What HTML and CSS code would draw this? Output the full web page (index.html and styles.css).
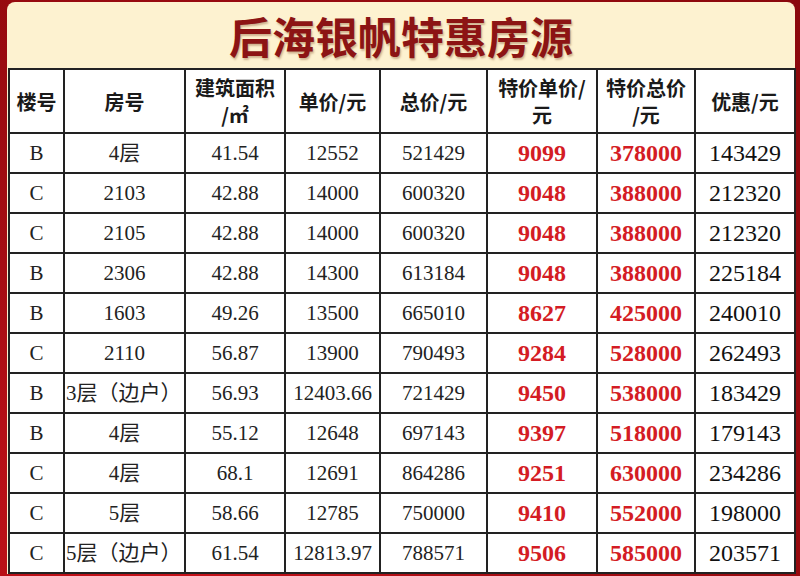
FILE: index.html
```html
<!DOCTYPE html>
<html lang="zh">
<head>
<meta charset="utf-8">
<title>后海银帆特惠房源</title>
<link rel="stylesheet" href="styles.css">
</head>
<body>
<div class="panel">
  <h1 class="title">后海银帆特惠房源</h1>
  <table class="grid">
    <colgroup>
      <col class="c1"><col class="c2"><col class="c3"><col class="c4"><col class="c5"><col class="c6"><col class="c7"><col class="c8">
    </colgroup>
    <thead>
      <tr>
        <th>楼号</th>
        <th>房号</th>
        <th>建筑面积<br>/㎡</th>
        <th>单价/元</th>
        <th>总价/元</th>
        <th>特价单价/<br>元</th>
        <th>特价总价<br>/元</th>
        <th>优惠/元</th>
      </tr>
    </thead>
    <tbody>
      <tr><td>B</td><td>4层</td><td>41.54</td><td>12552</td><td>521429</td><td class="red">9099</td><td class="red">378000</td><td class="save">143429</td></tr>
      <tr><td>C</td><td>2103</td><td>42.88</td><td>14000</td><td>600320</td><td class="red">9048</td><td class="red">388000</td><td class="save">212320</td></tr>
      <tr><td>C</td><td>2105</td><td>42.88</td><td>14000</td><td>600320</td><td class="red">9048</td><td class="red">388000</td><td class="save">212320</td></tr>
      <tr><td>B</td><td>2306</td><td>42.88</td><td>14300</td><td>613184</td><td class="red">9048</td><td class="red">388000</td><td class="save">225184</td></tr>
      <tr><td>B</td><td>1603</td><td>49.26</td><td>13500</td><td>665010</td><td class="red">8627</td><td class="red">425000</td><td class="save">240010</td></tr>
      <tr><td>C</td><td>2110</td><td>56.87</td><td>13900</td><td>790493</td><td class="red">9284</td><td class="red">528000</td><td class="save">262493</td></tr>
      <tr><td>B</td><td class="wide">3层（边户）</td><td>56.93</td><td>12403.66</td><td>721429</td><td class="red">9450</td><td class="red">538000</td><td class="save">183429</td></tr>
      <tr><td>B</td><td>4层</td><td>55.12</td><td>12648</td><td>697143</td><td class="red">9397</td><td class="red">518000</td><td class="save">179143</td></tr>
      <tr><td>C</td><td>4层</td><td>68.1</td><td>12691</td><td>864286</td><td class="red">9251</td><td class="red">630000</td><td class="save">234286</td></tr>
      <tr><td>C</td><td>5层</td><td>58.66</td><td>12785</td><td>750000</td><td class="red">9410</td><td class="red">552000</td><td class="save">198000</td></tr>
      <tr><td>C</td><td class="wide">5层（边户）</td><td>61.54</td><td>12813.97</td><td>788571</td><td class="red">9506</td><td class="red">585000</td><td class="save">203571</td></tr>
    </tbody>
  </table>
</div>
</body>
</html>
```
FILE: styles.css
```css
html, body {
  margin: 0;
  padding: 0;
}
body {
  width: 800px;
  height: 576px;
  overflow: hidden;
  background: radial-gradient(ellipse at 20% 95%, #c8121a 0%, #a50d13 40%, #8a080c 100%);
}
.panel {
  margin: 2px 5px 0 7px;
  padding: 0 1px;
  background: #fdf2d0;
  border-radius: 8px 8px 0 0;
}
.title {
  margin: 0;
  height: 66px;
  line-height: 66px;
  text-align: center;
  font-family: "Noto Sans CJK SC", sans-serif;
  font-weight: 700;
  font-size: 43px;
  color: #8c1414;
  text-shadow: 1px 2px 2px rgba(120, 60, 20, 0.35);
  letter-spacing: 0;
}
.grid {
  width: 786px;
  table-layout: fixed;
  border-collapse: collapse;
  background: #fff;
}
.c1 { width: 55px; }
.c2 { width: 121px; }
.c3 { width: 100px; }
.c4 { width: 95px; }
.c5 { width: 107px; }
.c6 { width: 110px; }
.c7 { width: 98px; }
.c8 { width: 100px; }
.grid th, .grid td {
  border: 2px solid #222;
  padding: 0;
  text-align: center;
  vertical-align: middle;
  white-space: nowrap;
  overflow: hidden;
}
.grid th {
  height: 62px;
  font-family: "Noto Sans CJK SC", sans-serif;
  font-weight: 700;
  font-size: 20px;
  line-height: 27px;
  color: #1a1a1a;
}
.grid td {
  height: 38px;
  font-family: "Liberation Serif", "Noto Sans CJK SC", serif;
  font-size: 21px;
  line-height: 24px;
  color: #222;
}
.grid td.wide {
  text-align: left;
  padding-left: 1px;
}
.grid td.red {
  font-size: 24px;
  font-weight: 700;
  color: #d41c24;
}
.grid td.save {
  font-size: 24px;
  color: #111;
}
```
